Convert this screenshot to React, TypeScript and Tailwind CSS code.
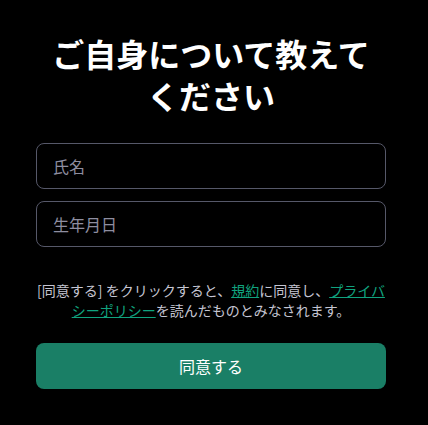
import React from 'react';

const font = { fontFamily: '"Noto Sans CJK JP", "Noto Sans", sans-serif' };

const App: React.FC = () => {
  return (
    <div className="min-h-screen w-full bg-black text-white" style={font}>
      <div className="ml-[36px] w-[350px] pt-[32px] flex flex-col">
        {/* Title */}
        <h1 className="text-[32px] leading-[42px] font-bold text-center px-[10px]">
          ご自身について教えてください
        </h1>

        {/* Inputs */}
        <div className="mt-[27px] flex flex-col gap-[12px]">
          <input
            placeholder="氏名"
            className="h-[46px] w-full rounded-lg border border-[#565869] bg-transparent px-4 text-base text-white placeholder:text-[#8e8ea0] outline-none"
          />
          <input
            placeholder="生年月日"
            className="h-[46px] w-full rounded-lg border border-[#565869] bg-transparent px-4 text-base text-white placeholder:text-[#8e8ea0] outline-none"
          />
        </div>

        {/* Terms */}
        <p className="mt-[33px] text-[14px] leading-[20px] text-center text-[#c5c5d2]">
          [同意する] をクリックすると、<a className="text-[#10a37f] underline">規約</a>に同意し、<a className="text-[#10a37f] underline">プライバシーポリシー</a>を読んだものとみなされます。
        </p>

        {/* Button */}
        <button className="mt-[23px] h-[46px] w-full rounded-lg bg-[#1a7f66] text-base text-white">
          同意する
        </button>
      </div>
    </div>
  );
};

export default App;
